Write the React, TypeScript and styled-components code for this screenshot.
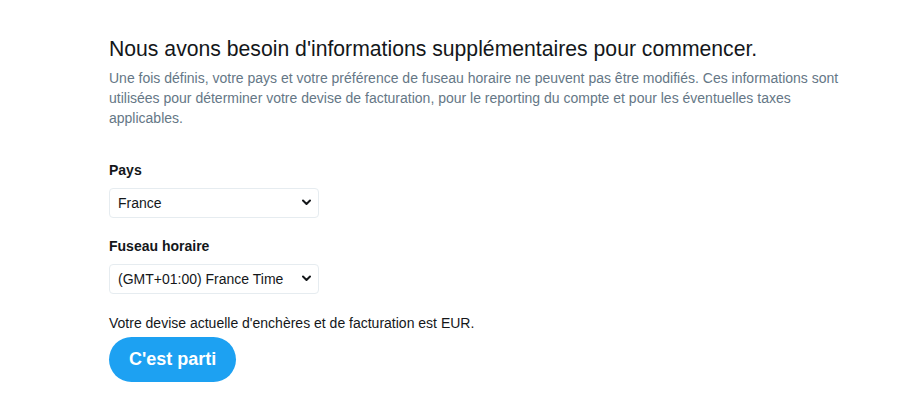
import React from 'react'
import styled, { createGlobalStyle } from 'styled-components'

const GlobalStyle = createGlobalStyle`
  html, body {
    margin: 0;
    padding: 0;
    background: #ffffff;
  }
  body {
    font-family: "Liberation Sans", Arial, Helvetica, sans-serif;
    color: #14171a;
  }
`

const Page = styled.main`
  padding: 36px 0 0 109px;
  max-width: 745px;
`

const Title = styled.h1`
  margin: 0;
  font-size: 21.2px;
  line-height: 26px;
  font-weight: 400;
  color: #14171a;
  white-space: nowrap;
`

const Intro = styled.p`
  margin: 6px 0 0;
  font-size: 14px;
  line-height: 20px;
  color: #657786;
`

const Form = styled.form`
  margin-top: 33px;
  display: flex;
  flex-direction: column;
`

const Field = styled.div`
  display: flex;
  flex-direction: column;
  margin-bottom: 19px;
`

const Label = styled.label`
  font-size: 14px;
  line-height: 18px;
  font-weight: 700;
  color: #14171a;
  margin-bottom: 9px;
`

const SelectWrap = styled.div`
  position: relative;
  width: 210px;
`

const Select = styled.select`
  appearance: none;
  -webkit-appearance: none;
  width: 210px;
  height: 30px;
  padding: 0 24px 0 8px;
  border: 1px solid #e6ecf0;
  border-radius: 4px;
  background: #ffffff;
  font-family: "Liberation Sans", Arial, sans-serif;
  font-size: 14px;
  color: #14171a;
  outline: none;
`

const Chevron = styled.svg`
  position: absolute;
  right: 8px;
  top: 11px;
  width: 9px;
  height: 7px;
  pointer-events: none;
`

const Note = styled.p`
  margin: 0 0 4px;
  font-size: 14px;
  line-height: 20px;
  color: #14171a;
`

const Button = styled.button`
  align-self: flex-start;
  height: 45px;
  padding: 0 20px;
  border: none;
  border-radius: 23px;
  background: #1da1f2;
  color: #ffffff;
  font-family: "Liberation Sans", Arial, sans-serif;
  font-size: 18px;
  font-weight: 700;
  cursor: pointer;
`

const ChevronIcon = () => (
  <Chevron viewBox="0 0 9 7">
    <path d="M1 1.5 L4.5 5 L8 1.5" fill="none" stroke="#14171a" strokeWidth="2" strokeLinecap="round" strokeLinejoin="round" />
  </Chevron>
)

type SelectFieldProps = {
  id: string
  label: string
  options: string[]
}

const SelectField = ({ id, label, options }: SelectFieldProps) => (
  <Field>
    <Label htmlFor={id}>{label}</Label>
    <SelectWrap>
      <Select id={id} defaultValue={options[0]}>
        {options.map((o) => (
          <option key={o} value={o}>{o}</option>
        ))}
      </Select>
      <ChevronIcon />
    </SelectWrap>
  </Field>
)

export default function App() {
  return (
    <>
      <GlobalStyle />
      <Page>
        <Title>Nous avons besoin d'informations supplémentaires pour commencer.</Title>
        <Intro>
          Une fois définis, votre pays et votre préférence de fuseau horaire ne peuvent pas être modifiés. Ces informations sont
          utilisées pour déterminer votre devise de facturation, pour le reporting du compte et pour les éventuelles taxes
          applicables.
        </Intro>
        <Form onSubmit={(e) => e.preventDefault()}>
          <SelectField id="country" label="Pays" options={['France', 'Belgique', 'Suisse', 'Canada']} />
          <SelectField id="tz" label="Fuseau horaire" options={['(GMT+01:00) France Time']} />
          <Note>Votre devise actuelle d'enchères et de facturation est EUR.</Note>
          <Button type="submit">C'est parti</Button>
        </Form>
      </Page>
    </>
  )
}
